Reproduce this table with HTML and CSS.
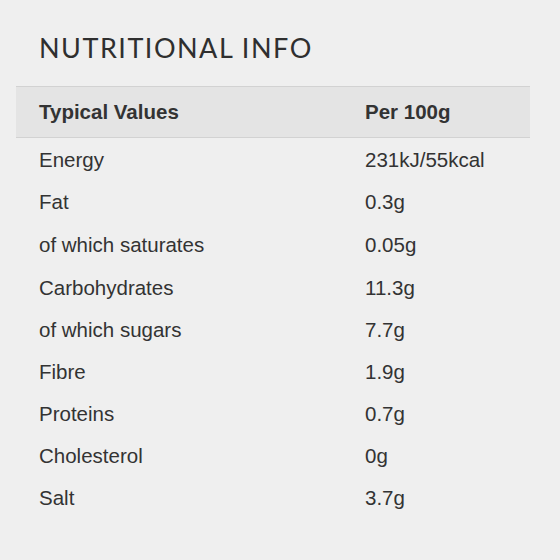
FILE: index.html
```html
<!DOCTYPE html>
<html>
<head>
<meta charset="utf-8">
<link rel="stylesheet" href="styles.css">
</head>
<body>
<div class="panel">
  <h2 class="title">NUTRITIONAL INFO</h2>
  <table class="nutri">
    <colgroup><col class="c1"><col class="c2"></colgroup>
    <thead>
      <tr><th>Typical Values</th><th>Per 100g</th></tr>
    </thead>
    <tbody>
      <tr><td>Energy</td><td>231kJ/55kcal</td></tr>
      <tr><td>Fat</td><td>0.3g</td></tr>
      <tr class="tall"><td>of which saturates</td><td>0.05g</td></tr>
      <tr><td>Carbohydrates</td><td>11.3g</td></tr>
      <tr><td>of which sugars</td><td>7.7g</td></tr>
      <tr><td>Fibre</td><td>1.9g</td></tr>
      <tr><td>Proteins</td><td>0.7g</td></tr>
      <tr><td>Cholesterol</td><td>0g</td></tr>
      <tr><td>Salt</td><td>3.7g</td></tr>
    </tbody>
  </table>
</div>
</body>
</html>
```
FILE: styles.css
```css
html, body {
  margin: 0;
  padding: 0;
  background: #efefef;
}
.panel {
  padding: 33px 30px 0 16px;
}
.title {
  margin: 0 0 23px 23px;
  font-family: Lato, sans-serif;
  font-weight: 400;
  font-size: 27px;
  letter-spacing: 1.5px;
  color: #2f2f2f;
  line-height: 30px;
}
.nutri {
  width: 514px;
  table-layout: fixed;
  border-collapse: collapse;
  font-family: "Liberation Sans", Arial, sans-serif;
  font-size: 20.5px;
  color: #333;
}
.c1 { width: 326px; }
.c2 { width: 188px; }
.nutri th {
  background: #e4e4e4;
  border-top: 1px solid #d2d2d2;
  border-bottom: 1px solid #d2d2d2;
  text-align: left;
  font-weight: 700;
  height: 50px;
  padding: 0 0 0 23px;
}
.nutri td {
  height: 40px;
  padding: 2px 0 0 23px;
  white-space: nowrap;
}
.nutri .tall td {
  height: 42px;
}
```
